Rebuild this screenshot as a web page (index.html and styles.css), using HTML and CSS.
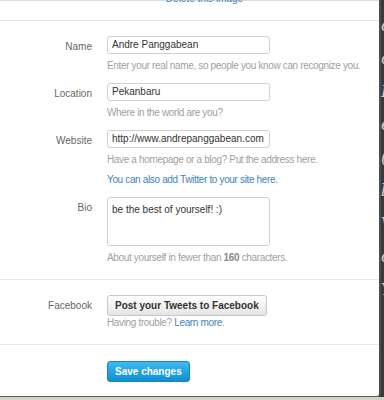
FILE: index.html
```html
<!DOCTYPE html>
<html lang="en">
<head>
    <meta charset="UTF-8">
    <meta name="viewport" content="width=device-width, initial-scale=1.0">
    <title>Profile settings</title>
    <link rel="stylesheet" href="styles.css">
</head>
<body>
    <div class="screen">
        <div class="main">
            <div class="panel">
                <div class="top">
                    <a href="#" class="delete">Delete this image</a>
                </div>

                <div class="section">
                    <div class="row">
                        <label class="label">Name</label>
                        <div class="field">
                            <div class="input">Andre Panggabean</div>
                            <p class="hint">Enter your real name, so people you know can recognize you.</p>
                        </div>
                    </div>
                    <div class="row">
                        <label class="label">Location</label>
                        <div class="field">
                            <div class="input">Pekanbaru</div>
                            <p class="hint">Where in the world are you?</p>
                        </div>
                    </div>
                    <div class="row">
                        <label class="label">Website</label>
                        <div class="field">
                            <div class="input">http://www.andrepanggabean.com</div>
                            <p class="hint">Have a homepage or a blog? Put the address here.</p>
                            <p class="hint link">You can also add Twitter to your site here.</p>
                        </div>
                    </div>
                    <div class="row">
                        <label class="label">Bio</label>
                        <div class="field">
                            <div class="input textarea">be the best of yourself! :)</div>
                            <p class="hint">About yourself in fewer than <b>160</b> characters.</p>
                        </div>
                    </div>
                </div>

                <div class="section">
                    <div class="row">
                        <label class="label">Facebook</label>
                        <div class="field">
                            <button class="btn">Post your Tweets to Facebook</button>
                            <p class="hint small">Having trouble? <a href="#">Learn more</a>.</p>
                        </div>
                    </div>
                </div>

                <div class="section last">
                    <div class="row">
                        <span class="label"></span>
                        <div class="field">
                            <button class="btn save">Save changes</button>
                        </div>
                    </div>
                </div>
            </div>
            <div class="backdrop">
                <span>ó</span><span>c</span><span>I</span><span>e</span><span>(</span><span>l</span><span>V</span><span>c</span><span>Y</span>
            </div>
        </div>
        <div class="taskbar"></div>
    </div>
</body>
</html>
```

FILE: styles.css
```css
* {
    margin: 0;
    padding: 0;
    box-sizing: border-box;
}
body {
    width: 384px;
    height: 400px;
    overflow: hidden;
    background-color: #3a3a3a;
    font-family: "Liberation Sans", Arial, sans-serif;
}
a {
    color: #3d83bd;
    text-decoration: none;
}
.screen {
    display: flex;
    flex-direction: column;
    height: 400px;
}
.main {
    display: flex;
    height: 397px;
}
.panel {
    width: 381px;
    height: 397px;
    flex-shrink: 0;
    background-color: white;
    border-right: 2px solid #4d4d4d;
    border-bottom: 1px solid #5a5a5a;
    border-bottom-right-radius: 4px;
    overflow: hidden;
}
.top {
    height: 21px;
    border-top: 1px solid #dcdcdc;
    border-bottom: 1px solid #e8e8e8;
    text-align: center;
    padding-left: 30px;
}
.delete {
    display: block;
    margin-top: -8px;
    font-size: 10px;
    color: #3d83bd;
}
.section {
    padding: 15px 0 14px;
    border-bottom: 1px solid #e8e8e8;
}
.section.last {
    padding-top: 16px;
    border-bottom: none;
}
.row {
    display: grid;
    grid-template-columns: 92px 1fr;
    column-gap: 15px;
    margin-bottom: 10px;
}
.row:last-child {
    margin-bottom: 0;
}
.label {
    text-align: right;
    font-size: 10px;
    color: #666;
    padding-top: 5px;
}
.input {
    width: 163px;
    height: 18px;
    border: 1px solid #cfcfcf;
    border-radius: 3px;
    font-size: 10px;
    line-height: 16px;
    color: #333;
    padding-left: 4px;
    white-space: nowrap;
}
.input.textarea {
    height: 49px;
    padding-top: 4px;
}
.hint {
    font-size: 10px;
    letter-spacing: -0.35px;
    line-height: 14px;
    color: #a0a0a0;
    margin-top: 5px;
    white-space: nowrap;
}
.hint b {
    color: #888;
}
.hint.link {
    color: #3d83bd;
    margin-top: 6px;
}
.hint.small {
    margin-top: 0;
}
.btn {
    height: 21px;
    padding: 0 7px;
    font-family: "Liberation Sans", Arial, sans-serif;
    font-size: 10px;
    font-weight: bold;
    color: #333;
    border: 1px solid #c8c8c8;
    border-radius: 3px;
    background: linear-gradient(#ffffff, #e4e4e4);
}
.btn.save {
    height: 21px;
    padding: 0 7px;
    color: white;
    border-color: #1283c7;
    background: linear-gradient(#3ebaf0, #0d8fd2);
}
.backdrop {
    flex: 1;
    display: flex;
    flex-direction: column;
    gap: 14px;
    padding-top: 16px;
    overflow: hidden;
    color: #d0d0d0;
    font-family: "DejaVu Serif", serif;
    font-style: italic;
    font-size: 16px;
}
.taskbar {
    height: 3px;
    background-color: #d4d0c8;
}
```
